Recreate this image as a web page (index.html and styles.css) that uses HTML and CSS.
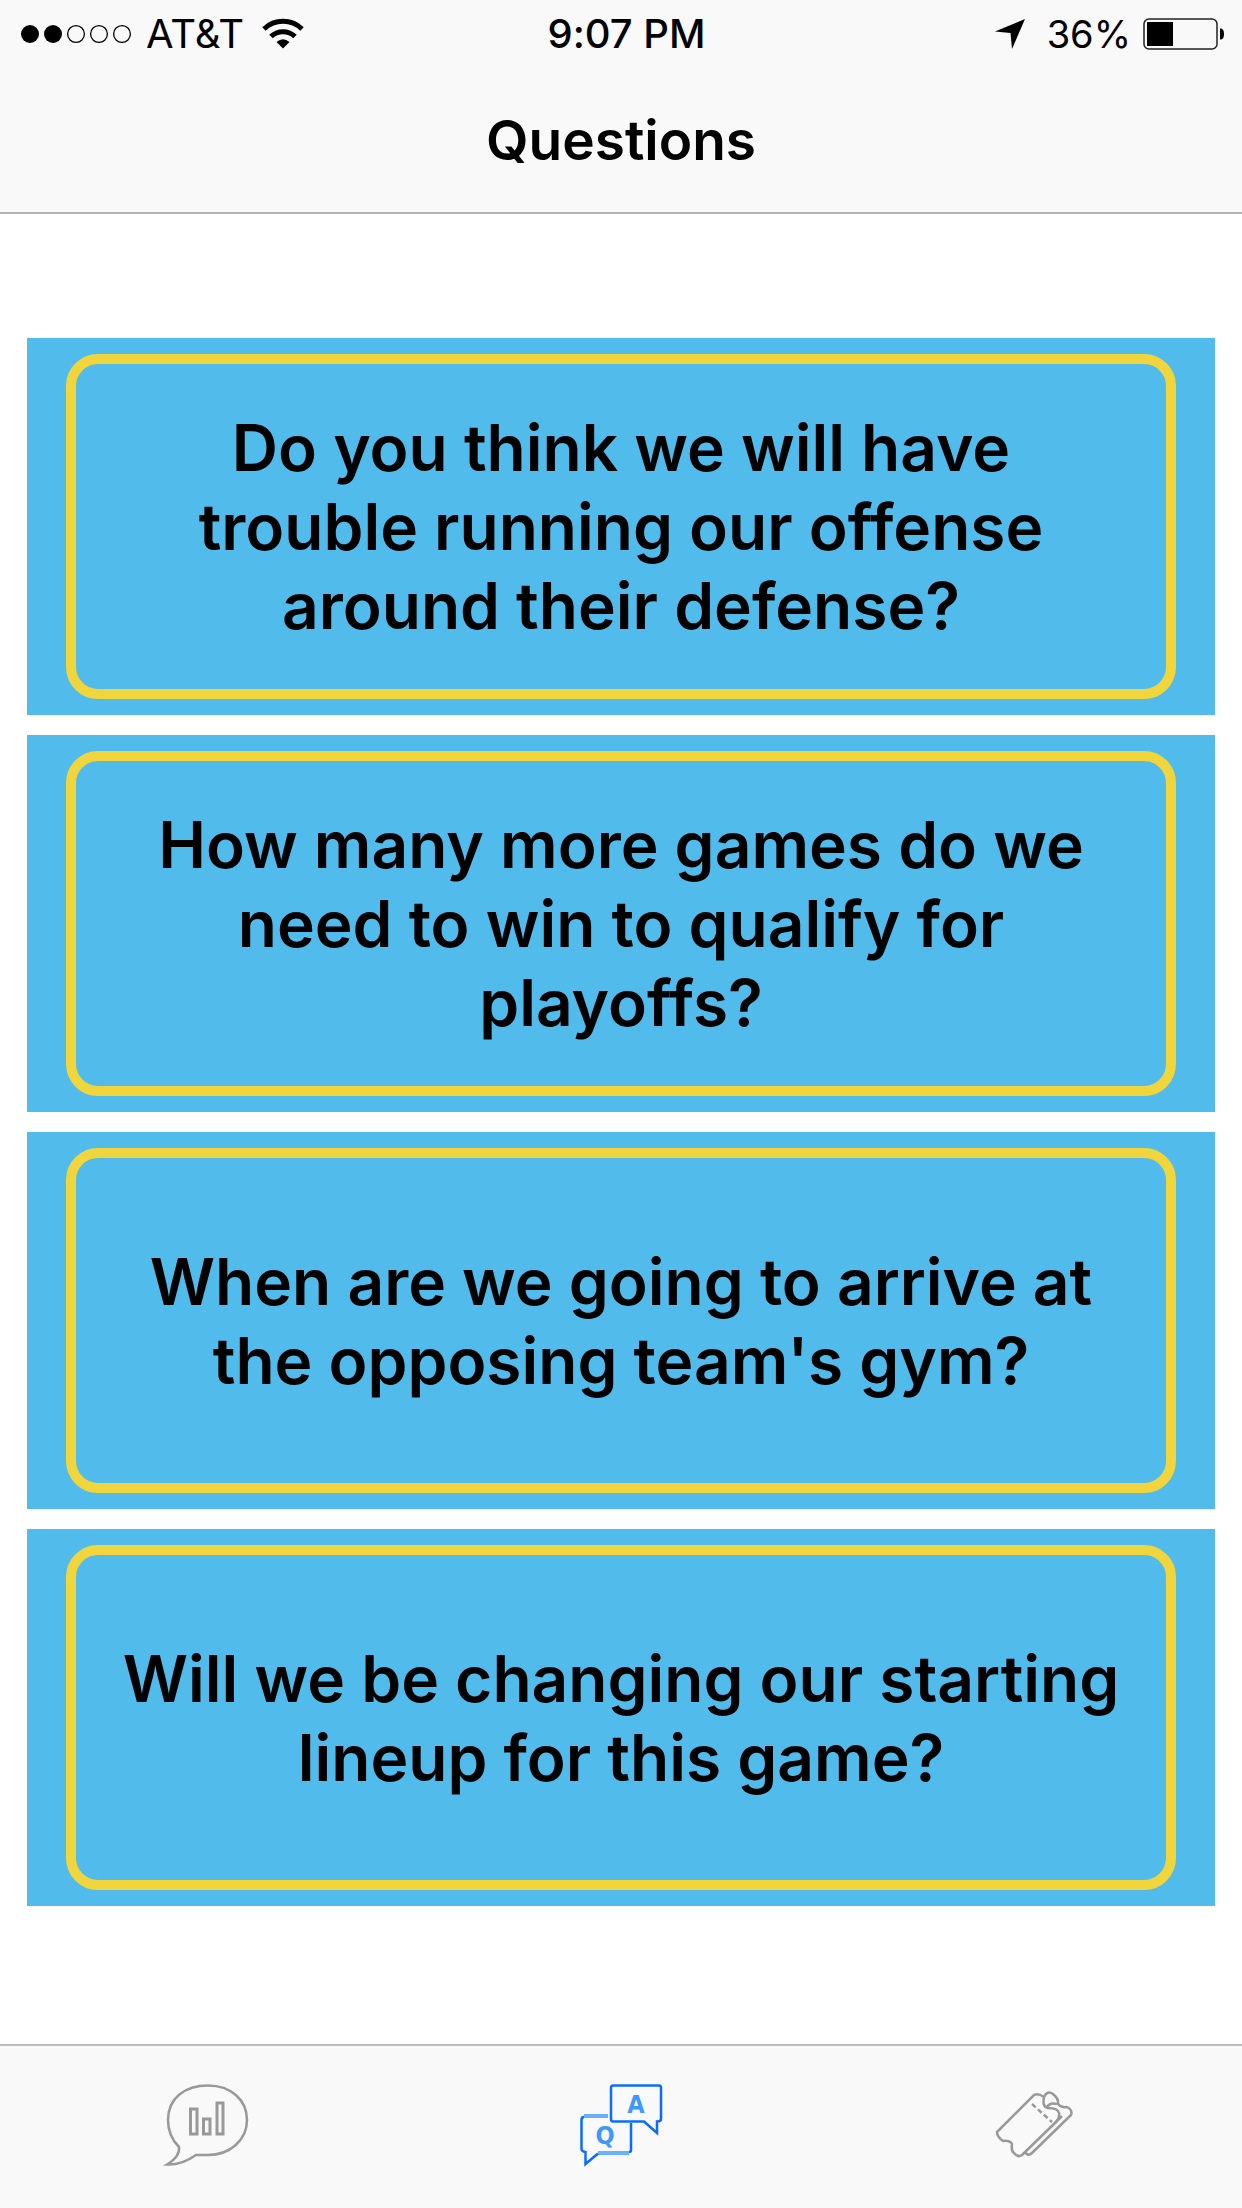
FILE: index.html
```html
<!DOCTYPE html>
<html lang="en">
<head>
<meta charset="utf-8">
<meta name="viewport" content="width=device-width, initial-scale=1">
<title>Questions</title>
<link rel="stylesheet" href="styles.css">
</head>
<body>
<header class="header">
  <div class="status">
    <div class="status-left">
      <svg class="signal" width="112" height="20" viewBox="0 0 112 20" aria-hidden="true">
        <circle cx="10" cy="10" r="9"/>
        <circle cx="33" cy="10" r="9"/>
        <g fill="none" stroke="#000" stroke-width="1.3">
          <circle cx="56" cy="10" r="8.4"/>
          <circle cx="79" cy="10" r="8.4"/>
          <circle cx="102" cy="10" r="8.4"/>
        </g>
      </svg>
      <span class="carrier">AT&amp;T</span>
      <svg class="wifi" width="42" height="32" viewBox="0 0 42 32" aria-hidden="true">
        <g fill="none" stroke="#000" stroke-width="5">
          <path d="M2 11C12.500 .8 29.500 .8 40 11"/>
          <path d="M9 18.500C15.500 12 26.500 12 33 18.500"/>
        </g>
        <path d="M14.500 24Q21 18.500 27.500 24L21 30.500Z"/>
      </svg>
    </div>
    <time class="time">9:07 PM</time>
    <div class="status-right">
      <svg width="30" height="30" viewBox="0 0 30 30" aria-hidden="true">
        <path d="M30 0L17 30L15.500 14L0 12.500Z"/>
      </svg>
      <span class="percent">36%</span>
      <svg width="82" height="32" viewBox="0 0 82 32" aria-hidden="true">
        <rect x="1" y="1" width="73" height="30" rx="5" fill="none" stroke="#222" stroke-width="1.500"/>
        <rect x="4" y="4" width="26" height="24"/>
        <path d="M77 10.500H78Q81 11 81 16T78 21.500H77Z"/>
      </svg>
    </div>
  </div>
  <h1 class="title">Questions</h1>
</header>

<main class="questions">
  <button class="card" type="button"><span class="card-frame">Do you think we will have trouble running our offense around their defense?</span></button>
  <button class="card" type="button"><span class="card-frame">How many more games do we need to win to qualify for playoffs?</span></button>
  <button class="card" type="button"><span class="card-frame">When are we going to arrive at the opposing team's gym?</span></button>
  <button class="card" type="button"><span class="card-frame">Will we be changing our starting lineup for this game?</span></button>
</main>

<nav class="tabs">
  <a class="tab" href="#stats" aria-label="Stats">
    <svg width="110" height="110" viewBox="2 0 110 110" fill="none" stroke="#999" stroke-width="2.500" aria-hidden="true">
      <path d="M29 77C22 70 18 60 18 50C18 28 35 15.500 58 15.500S97 30 97 50S80 85 58 85H46C39 90 30 95 17 94.500C26 89 30 84 29 77Z"/>
      <path stroke-width="3" d="M40.500 39H47V64H40.500ZM53.500 49H60V64H53.500ZM67 33H73V64H67Z"/>
    </svg>
  </a>
  <a class="tab" href="#questions" aria-label="Questions" aria-current="page">
    <svg width="110" height="110" viewBox="-4 0 110 110" fill="none" stroke="#0a6cff" stroke-width="2.500" aria-hidden="true">
      <path d="M43 15.500H89Q91 15.500 91 18V49Q91 51.500 87 51.500V63L74 51.500H43Q41 51.500 41 49V18Q41 15.500 43 15.500Z"/>
      <path d="M61 53V80Q61 82 59 82"/>
      <path stroke="#69b0ff" stroke-width="4" d="M38 46H14M59 83H28"/>
      <path d="M14 47Q11.500 47 11.500 50V79Q11.500 81.500 15.500 82V94L28 83.500"/>
      <text class="glyph" x="66" y="43">A</text>
      <text class="glyph" x="35" y="74">Q</text>
    </svg>
  </a>
  <a class="tab" href="#tickets" aria-label="Tickets">
    <svg width="110" height="110" viewBox="0 0 110 110" fill="none" stroke="#999" stroke-width="2.500" aria-hidden="true">
      <path d="M17 62L54 25Q58 23 64 27Q62 37 68 38Q78 38 79 43Q80 48 75 53L42 85Q38 88 34 83Q31 81 32 74Q30 70 23 71Q17 67 17 62Z"/>
      <path d="M64 27Q67 20 73 24Q79 29 78 34Q81 38 87 37Q93 40 91 45L52 83Q48 87 45 82"/>
      <path d="M67 37Q70 32 77 34M75 53L82 46"/>
      <path stroke-dasharray="5 3" d="M52 34L72 52"/>
    </svg>
  </a>
</nav>
</body>
</html>
```
FILE: styles.css
```css
* {
  box-sizing: border-box;
}

body {
  margin: 0;
  min-height: 100vh;
  display: flex;
  flex-direction: column;
  background: #fff;
  color: #000;
  font-family: Inter, "Liberation Sans", sans-serif;
  font-variant-ligatures: none;
}

.header {
  background: #f9f9f9;
  border-bottom: 2px solid #b4b4b4;
  padding-bottom: 36px;
}

.status {
  display: grid;
  grid-template-columns: 1fr auto 1fr;
  align-items: center;
  padding: 0 17px 0 20px;
  font-size: 40px;
  line-height: 68px;
}

.status-left,
.status-right {
  display: flex;
  align-items: center;
}

.status-right {
  justify-content: flex-end;
  gap: 12px;
}

.carrier {
  margin-left: 14px;
}

.wifi {
  margin-left: 18px;
}

.percent {
  margin-left: 10px;
  font-size: 38px;
}

.time {
  margin-left: 8px;
  font-weight: 500;
}

.title {
  margin: 36px 0 0;
  font-size: 55px;
  font-weight: 600;
  line-height: 72px;
  text-align: center;
}

.questions {
  flex: 1;
  display: flex;
  flex-direction: column;
  gap: 20px;
  padding: 124px 27px;
}

.card {
  display: flex;
  min-height: 377px;
  margin: 0;
  padding: 16px 39px;
  border: 0;
  background: #51bbec;
  color: inherit;
  font-family: inherit;
  font-size: 64px;
  font-weight: 600;
  font-variant-ligatures: none;
  line-height: 79px;
}

.card-frame {
  flex: 1;
  align-self: stretch;
  display: flex;
  align-items: center;
  justify-content: center;
  padding: 0 44px;
  border: 10px solid #f0d63c;
  border-radius: 32px;
  text-align: center;
}

.tabs {
  display: grid;
  grid-template-columns: repeat(3, 1fr);
  background: #f9f9f9;
  border-top: 2px solid #bdbdbd;
}

.tab {
  display: flex;
  justify-content: center;
  padding: 24px 0 28px;
}

.glyph {
  fill: #3f97ff;
  stroke: none;
  font-family: "Liberation Sans Narrow", "DejaVu Sans Condensed", sans-serif;
  font-size: 25px;
  font-weight: 700;
  text-anchor: middle;
}
```
